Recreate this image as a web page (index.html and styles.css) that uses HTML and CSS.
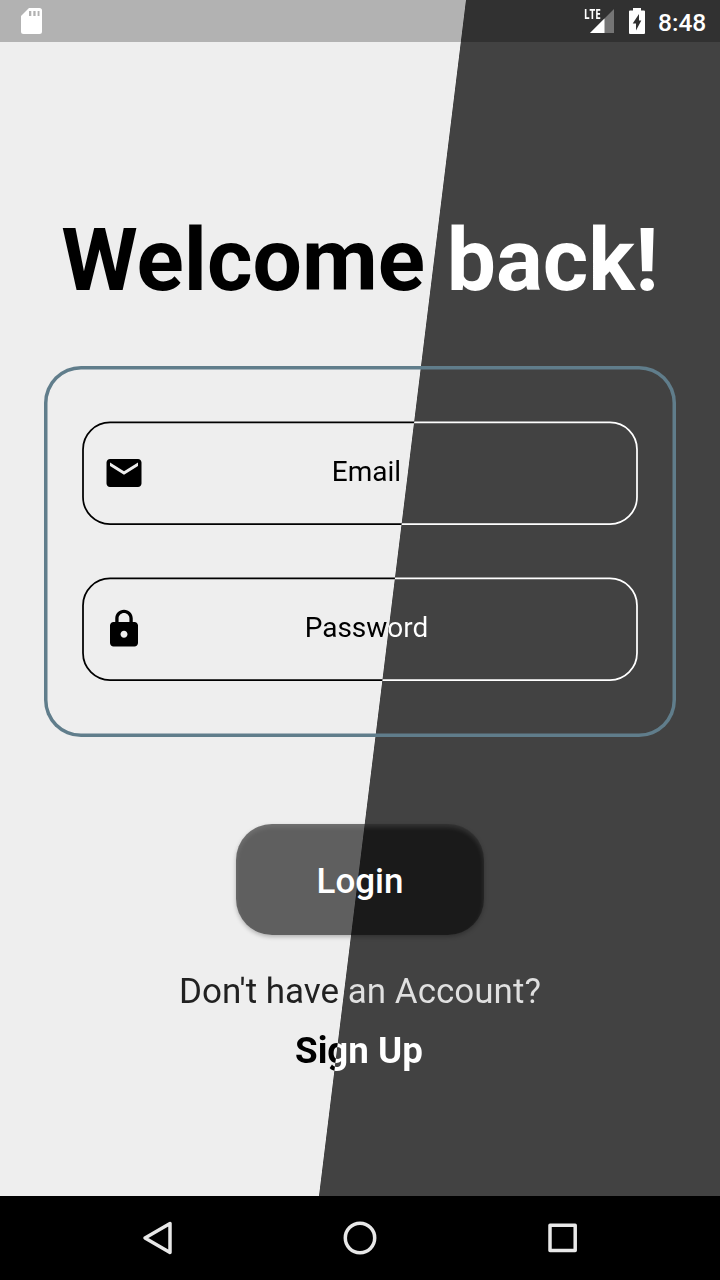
FILE: index.html
```html
<!DOCTYPE html>
<html lang="en">
<head>
<meta charset="utf-8">
<title>Login</title>
<link rel="stylesheet" href="styles.css">
</head>
<body>
<header class="status-bar">
  <svg class="sd-icon" width="22" height="26" viewBox="0 0 22 26"><path fill="#fff" fill-rule="evenodd" d="M8 0H18.500Q21 0 21 2.500V23.500Q21 26 18.500 26H2.500Q0 26 0 23.500V8ZM8 3V8H10.300V3ZM12.300 3V8H14.600V3ZM16.600 3V8H18.500V3Z"/></svg>
  <div class="status-right">
    <div class="signal">
      <svg width="24" height="24" viewBox="0 0 24 24"><path fill="#757575" d="M24 0V24H0Z"/><path fill="#fff" d="M14.500 9.500V24H0Z"/></svg>
      <span class="lte">LTE</span>
    </div>
    <svg class="battery" width="18" height="26" viewBox="0 0 18 26"><path fill="#fff" fill-rule="evenodd" d="M5 0H13V2.500H16Q17 2.500 17 3.500V25Q17 26 16 26H2Q1 26 1 25V3.500Q1 2.500 2 2.500H5ZM11 6L4.700 15.500H8V22.500L13.300 12.500H11Z"/></svg>
    <span class="clock">8:48</span>
  </div>
</header>
<main class="login">
  <h1 class="title split-text">Welcome back!</h1>
  <form class="card">
    <label class="field">
      <svg class="outline" width="556" height="104" viewBox="0 0 556 104">
        <linearGradient id="split-email" gradientUnits="userSpaceOnUse" x1="331.800" y1="0" x2="332.800" y2=".123"><stop offset="0" stop-color="#000"/><stop offset="1" stop-color="#fff"/></linearGradient>
        <rect x="1" y="1.400" width="554" height="101.600" rx="27" stroke="url(#split-email)"/>
      </svg>
      <svg class="field-icon" width="42" height="42" viewBox="0 0 24 24"><path d="M20 4H4c-1.100 0-1.990.9-1.990 2L2 18c0 1.100.9 2 2 2h16c1.100 0 2-.9 2-2V6c0-1.100-.9-2-2-2zm0 4l-8 5-8-5V6l8 5 8-5v2z"/></svg>
      <span class="field-text split-text">Email</span>
    </label>
    <label class="field">
      <svg class="outline" width="556" height="104" viewBox="0 0 556 104">
        <linearGradient id="split-password" gradientUnits="userSpaceOnUse" x1="312.600" y1="0" x2="313.600" y2=".123"><stop offset="0" stop-color="#000"/><stop offset="1" stop-color="#fff"/></linearGradient>
        <rect x="1" y="1.400" width="554" height="101.600" rx="27" stroke="url(#split-password)"/>
      </svg>
      <svg class="field-icon" width="42" height="42" viewBox="0 0 24 24"><path d="M18 8h-1V6c0-2.760-2.240-5-5-5S7 3.240 7 6v2H6c-1.100 0-2 .9-2 2v10c0 1.100.9 2 2 2h12c1.100 0 2-.9 2-2V10c0-1.100-.9-2-2-2zm-6 9c-1.100 0-2-.9-2-2s.9-2 2-2 2 .9 2 2-.9 2-2 2zm3.100-9H8.900V6c0-1.710 1.390-3.100 3.100-3.100 1.710 0 3.100 1.390 3.100 3.100v2z"/></svg>
      <span class="field-text split-text">Password</span>
    </label>
  </form>
  <button class="login-button" type="button">Login</button>
  <p class="prompt split-text">Don't have an Account?</p>
  <a class="signup split-text">Sign Up</a>
</main>
<nav class="nav-bar">
  <svg width="34" height="36" viewBox="0 0 34 36"><path d="M30 3.500V32.500L5 18Z"/></svg>
  <svg width="36" height="36" viewBox="0 0 36 36"><circle cx="18" cy="18" r="14.700"/></svg>
  <svg width="36" height="36" viewBox="0 0 36 36"><path d="M5 5.200H30.200V30.500H5Z"/></svg>
</nav>
</body>
</html>
```

FILE: styles.css
```css
* { box-sizing: border-box; }

body {
  margin: 0;
  height: 1280px;
  display: flex;
  flex-direction: column;
  overflow: hidden;
  font-family: Roboto, sans-serif;
  background: linear-gradient(97.007deg, #eee calc(50% + 26.700px), #424242 calc(50% + 27.500px)) fixed;
}

.status-bar {
  height: 42px;
  display: flex;
  justify-content: space-between;
  align-items: center;
  padding: 0 14px 0 21px;
  background: rgba(0, 0, 0, .25);
}
.status-right { display: flex; align-items: center; gap: 14px; }
.signal { position: relative; display: flex; }
.lte {
  position: absolute;
  left: -6px;
  top: -2px;
  color: #fff;
  font: 700 15px/13px "Open Sans", sans-serif;
  transform: scaleX(.66);
  transform-origin: 0 0;
}
.clock {
  width: 48px;
  margin-left: -2px;
  padding-top: 3px;
  color: #fff;
  font-weight: 500;
  font-size: 24.500px;
  line-height: 39px;
  white-space: nowrap;
}

.login { height: 1154px; display: flex; flex-direction: column; align-items: center; }

/* Text turns from dark to light where the page's diagonal crosses it. */
.split-text {
  --dark: #000;
  --light: #fff;
  color: transparent;
  background: linear-gradient(97.007deg, var(--dark) calc(50% + 26.700px), var(--light) calc(50% + 27.500px)) fixed;
  -webkit-background-clip: text;
  background-clip: text;
}

.title { margin: 167px 0 0; font-size: 87.500px; line-height: 103px; font-weight: 700; white-space: nowrap; }

.card {
  width: 632px;
  height: 371px;
  margin-top: 53.600px;
  padding: 55.400px 38px;
  display: flex;
  flex-direction: column;
  gap: 52px;
  box-shadow: inset 0 0 0 3.500px #607d8b;
  border-radius: 37px;
}
.field {
  position: relative;
  height: 104px;
  flex: none;
  display: flex;
  align-items: center;
  padding: 0 21px;
}
.outline { position: absolute; inset: 0; fill: none; stroke-width: 1.750; }
.field-icon { fill: #000; }
.field-text { flex: 1; text-align: center; font-size: 28px; line-height: 33px; margin: 0 29px 2px 0; }

.login-button {
  width: 248px;
  height: 111px;
  margin-top: 87.400px;
  padding: 5px 0 0;
  border: 0;
  border-radius: 36px;
  background: rgba(0, 0, 0, .6);
  box-shadow: 0 2px 4px rgba(0, 0, 0, .25), inset 0 3px 5px rgba(255, 255, 255, .12);
  color: #fff;
  font: 500 35px/41px Roboto, sans-serif;
}
.prompt { --dark: #212121; --light: #e0e0e0; margin: 36px 0 0; font-size: 35px; line-height: 41px; }
.signup { margin: 17px 2px 0 0; font-size: 36.750px; line-height: 43px; font-weight: 700; }

.nav-bar {
  height: 84px;
  display: flex;
  justify-content: space-between;
  align-items: center;
  padding: 0 139px 0 140px;
  background: #000;
}
.nav-bar svg { fill: none; stroke: #e8e8e8; stroke-width: 3.500; stroke-linejoin: round; }
```
